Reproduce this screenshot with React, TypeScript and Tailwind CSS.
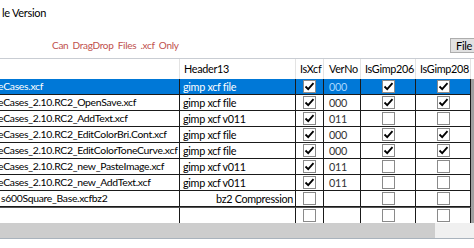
import React from "react";

type Row = {
  name: string;
  header13: string;
  center?: boolean;
  isXcf: boolean;
  verNo: string;
  g206: boolean;
  g208: boolean;
};

const rows: Row[] = [
  { name: "eCases.xcf", header13: "gimp xcf file", isXcf: true, verNo: "000", g206: true, g208: true },
  { name: "eCases_2.10.RC2_OpenSave.xcf", header13: "gimp xcf file", isXcf: true, verNo: "000", g206: true, g208: true },
  { name: "eCases_2.10.RC2_AddText.xcf", header13: "gimp xcf v011", isXcf: true, verNo: "011", g206: false, g208: false },
  { name: "eCases_2.10.RC2_EditColorBri.Cont.xcf", header13: "gimp xcf file", isXcf: true, verNo: "000", g206: true, g208: true },
  { name: "eCases_2.10.RC2_EditColorToneCurve.xcf", header13: "gimp xcf file", isXcf: true, verNo: "000", g206: true, g208: true },
  { name: "eCases_2.10.RC2_new_PasteImage.xcf", header13: "gimp xcf v011", isXcf: true, verNo: "011", g206: false, g208: false },
  { name: "eCases_2.10.RC2_new_AddText.xcf", header13: "gimp xcf v011", isXcf: true, verNo: "011", g206: false, g208: false },
  { name: "s600Square_Base.xcfbz2", header13: "bz2 Compression", center: true, isXcf: false, verNo: "", g206: false, g208: false },
];

const CheckBox = ({ checked }: { checked: boolean }) => (
  <span className="inline-flex h-[13px] w-[13px] items-center justify-center border border-[#8a8a8a] bg-white">
    {checked && (
      <svg width="11" height="11" viewBox="0 0 11 11">
        <path d="M1.5 5.5 L4.2 8.2 L9.5 2.2" fill="none" stroke="#000" strokeWidth="1.8" />
      </svg>
    )}
  </span>
);

const cols = "grid grid-cols-[180px_116px_28px_37px_55px_55px]";

const App = () => {
  return (
    <div
      className="relative h-[248px] w-[474px] overflow-hidden bg-white text-[10.4px] tracking-[-0.3px] text-black"
      style={{ fontFamily: 'Lato, "Liberation Sans", sans-serif' }}
    >
      {/* top area */}
      <div className="relative h-[58px]">
        <div className="absolute left-[2px] top-[5px] text-[11px]">le Version</div>
        <div className="absolute left-[52px] top-[38px] text-[10px] text-[#c0504d] [word-spacing:2px]">
          Can DragDrop Files .xcf Only
        </div>
        <div className="absolute left-[450px] top-[38px] flex h-[15px] w-[40px] items-start border border-[#adadad] bg-[#e1e1e1] pl-[5px] text-[11px] leading-[13px]">
          File
        </div>
      </div>

      {/* grid */}
      <div className="border-t border-[#c9cdd3]">
        <div className={`${cols} h-[20px] w-[471px] text-[10.8px]`}>
          <div className="border-r border-[#e3e3e3]" />
          <div className="flex items-center border-r border-[#e3e3e3] pl-[4px]">Header13</div>
          <div className="flex items-center border-r border-[#e3e3e3] pl-[4px]">IsXcf</div>
          <div className="flex items-center border-r border-[#e3e3e3] pl-[5px]">VerNo</div>
          <div className="flex items-center border-r border-[#e3e3e3] pl-[4px]">IsGimp206</div>
          <div className="flex items-center border-r border-[#e3e3e3] pl-[4px]">IsGimp208</div>
        </div>

        <div className="flex">
          <div className="w-[471px]">
            {rows.map((r, i) => {
              const sel = i === 0;
              const bg = sel ? "bg-[#0078d7] text-white" : "bg-white";
              return (
                <div key={i} className={`${cols} h-[16px] leading-[15px]`}>
                  <div className={`${bg} overflow-hidden whitespace-nowrap border-b border-r border-[#1a1a1a]`}>
                    <span className={i === 7 ? "ml-[1px]" : "ml-[-2px]"}>{r.name}</span>
                  </div>
                  <div
                    className={`${bg} overflow-hidden whitespace-nowrap border-b border-r border-[#1a1a1a] text-[10.8px] ${
                      r.center ? "pl-[36px]" : "pl-[3px]"
                    }`}
                  >
                    {r.header13}
                  </div>
                  <div className={`${bg} flex items-center justify-center border-b border-r border-[#1a1a1a]`}>
                    <CheckBox checked={r.isXcf} />
                  </div>
                  <div
                    className={`${sel ? "bg-[#0078d7] text-[#a8d6ff]" : "bg-white text-[#333]"} border-b border-r border-[#1a1a1a] pl-[5px] text-[10.8px]`}
                  >
                    {r.verNo}
                  </div>
                  <div className={`${bg} flex items-center justify-center border-b border-r border-[#1a1a1a]`}>
                    <CheckBox checked={r.g206} />
                  </div>
                  <div className={`${bg} flex items-center justify-center border-b border-r border-[#1a1a1a]`}>
                    <CheckBox checked={r.g208} />
                  </div>
                </div>
              );
            })}
            {/* empty new row */}
            <div className={`${cols} h-[16px] border-t border-[#555]`}>
              <div className="border-r border-[#1a1a1a]" />
              <div className="border-r border-[#1a1a1a]" />
              <div className="flex items-center justify-center border-r border-[#1a1a1a]">
                <CheckBox checked={false} />
              </div>
              <div className="border-r border-[#1a1a1a]" />
              <div className="flex items-center justify-center border-r border-[#1a1a1a]">
                <CheckBox checked={false} />
              </div>
              <div className="flex items-center justify-center border-r border-[#1a1a1a]">
                <CheckBox checked={false} />
              </div>
            </div>
          </div>
          <div className="w-[3px] bg-[#a0a0a0]" />
        </div>

        {/* horizontal scrollbar */}
        <div className="flex h-[16px] border-b border-[#a9b3bd] bg-[#f0f0f0]">
          <div className="w-[435px] bg-[#cdcdcd]" />
        </div>
      </div>
    </div>
  );
};

export default App;
